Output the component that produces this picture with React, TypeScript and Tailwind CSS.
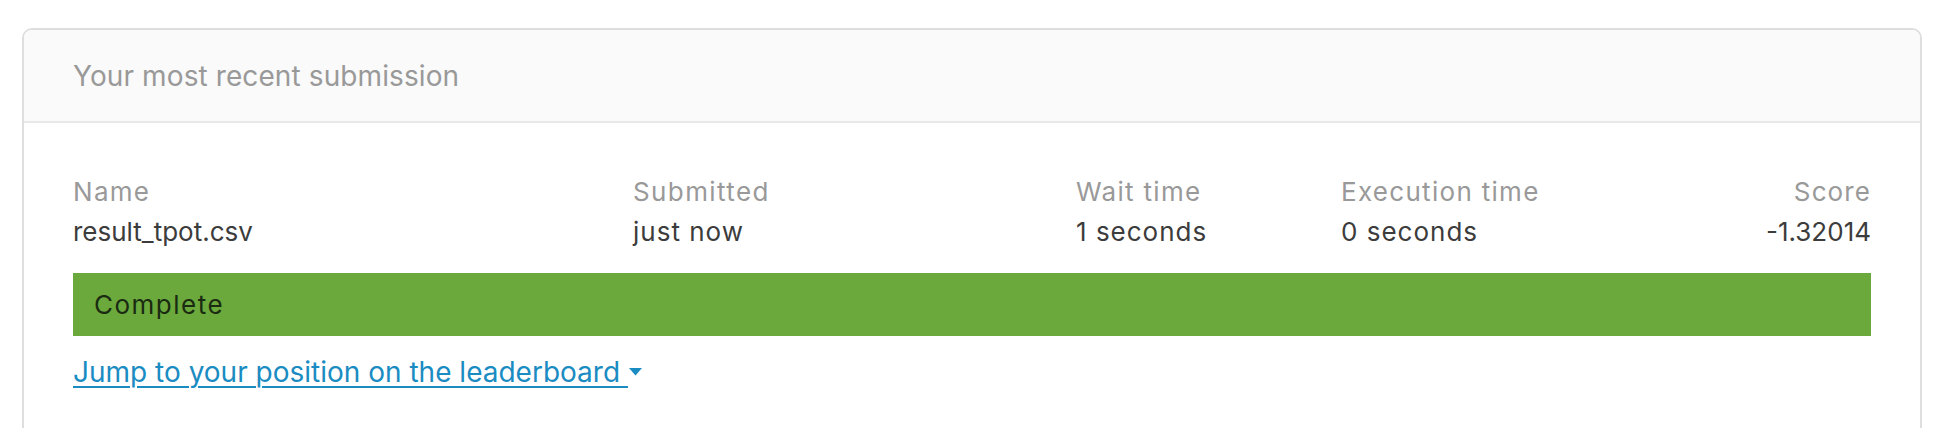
import React from "react";

export default function App() {
  return (
    <div className="min-h-[428px] bg-white pt-[28px] pl-[22px] pr-[32px] font-['Inter','Noto_Sans',sans-serif]">
      <div className="h-[460px] rounded-t-[10px] border-2 border-[#dedede] border-b-0 bg-white">
        <div className="flex h-[93px] items-center rounded-t-[8px] border-b-2 border-[#e8e8e8] bg-[#fafafa] pl-[49px]">
          <span className="text-[28px] leading-[40px] tracking-[0.1px] text-[#999999]">Your most recent submission</span>
        </div>
        <div className="px-[49px] pt-[49px]">
          <div className="grid grid-cols-[560px_443px_265px_1fr_auto] text-[26px] leading-[40px]">
            <div className="tracking-[1.3px] text-[#999999]">Name</div>
            <div className="tracking-[1.4px] text-[#999999]">Submitted</div>
            <div className="tracking-[1.3px] text-[#999999]">Wait time</div>
            <div className="tracking-[1.3px] text-[#999999]">Execution time</div>
            <div className="text-right tracking-[1.1px] text-[#999999]">Score</div>
            <div className="text-[#3c3c3c]">result_tpot.csv</div>
            <div className="tracking-[1px] text-[#3c3c3c]">just now</div>
            <div className="tracking-[1px] text-[#3c3c3c]">1 seconds</div>
            <div className="tracking-[1px] text-[#3c3c3c]">0 seconds</div>
            <div className="text-right text-[#3c3c3c]">-1.32014</div>
          </div>
          <div className="mt-[21px] flex h-[63px] items-center bg-[#6ba93c] pl-[21px]">
            <span className="text-[26px] tracking-[1.5px] text-[#1a2b12]">Complete</span>
          </div>
          <div className="mt-[16px]">
            <a href="#" className="inline-flex items-center text-[28px] leading-[40px] text-[#1a8cc2]">
              <span className="underline decoration-[2px] underline-offset-[4px]">Jump to your position on the leaderboard&nbsp;</span>
              <svg width="13" height="8" viewBox="0 0 13 8" className="ml-[1px]">
                <path d="M0 0 L13 0 L6.5 7.5 Z" fill="#1a8cc2" />
              </svg>
            </a>
          </div>
        </div>
      </div>
    </div>
  );
}
